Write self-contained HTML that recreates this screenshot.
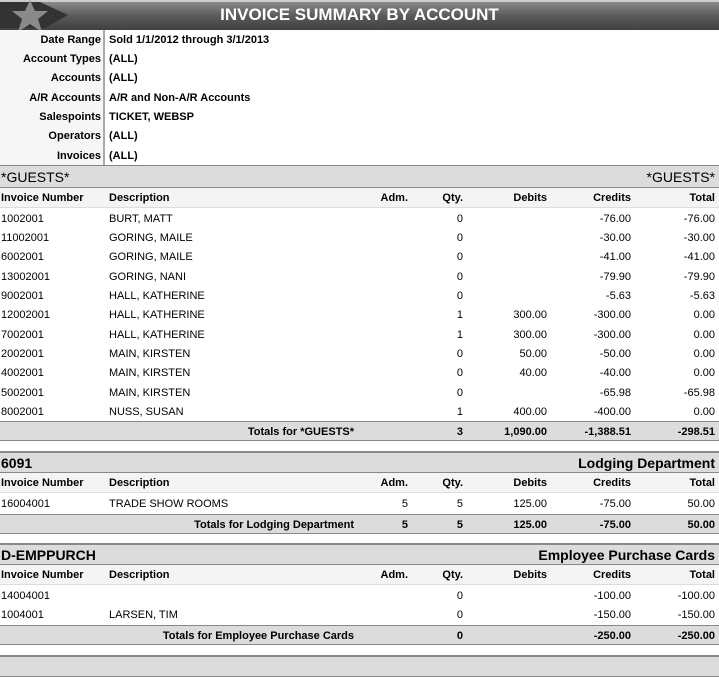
<!DOCTYPE html>
<html><head><style>
*{margin:0;padding:0;box-sizing:border-box}
body{width:719px;height:661px;position:relative;background:#fff;font-family:"Liberation Sans",Arial,sans-serif;font-size:11px;color:#000;overflow:hidden}
.a{position:absolute}
.r{position:absolute;left:0;width:719px;height:19px;line-height:19px}
.r span{position:absolute;white-space:nowrap;top:1px}
.b{font-weight:bold}
.hd{background:#f4f4f4;font-weight:bold;border-bottom:1px solid #ddd}
.tot{background:#dcdcdc;font-weight:bold;border-top:1px solid #888;border-bottom:1px solid #888;height:20px}
.sec{position:absolute;left:0;width:719px;height:22px;line-height:21px;background:#dcdcdc;border-top:2px solid #888;border-bottom:1px solid #888;font-size:14px}
.c1{left:1px}.c2{left:109px}
.ad{right:311px}.qt{right:256px}.de{right:172px}.cr{right:88px}.to{right:4px}
</style></head><body>
<div class="a" style="left:0;top:0;width:719px;height:30px;background:linear-gradient(#8a8a8a,#5a5a5a 50%,#404040);border-top:2px solid #ccc"></div>
<svg class="a" style="left:0;top:0" width="80" height="30"><polygon points="0,2 40,2 68,15 45,28 0,28" fill="#333"/><polygon points="30,0 35,11 48,11 38,19 42,32 30,24 18,32 22,19 12,11 25,11" fill="#8a8a8a"/></svg>
<div class="a" style="left:0;top:5px;width:719px;text-align:center;color:#fff;font-weight:bold;font-size:17px;line-height:20px">INVOICE SUMMARY BY ACCOUNT</div>
<div class="a" style="left:0;top:30px;width:105px;height:135px;background:#f6f6f6;border-right:2px solid #aaa"></div>
<div class="a" style="left:0;top:165px;width:719px;height:1px;background:#888"></div>
<div class="r b" style="top:30px"><span style="right:618px">Date Range</span><span style="left:109px">Sold 1/1/2012 through 3/1/2013</span></div>
<div class="r b" style="top:49px"><span style="right:618px">Account Types</span><span style="left:109px">(ALL)</span></div>
<div class="r b" style="top:68px"><span style="right:618px">Accounts</span><span style="left:109px">(ALL)</span></div>
<div class="r b" style="top:88px"><span style="right:618px">A/R Accounts</span><span style="left:109px">A/R and Non-A/R Accounts</span></div>
<div class="r b" style="top:107px"><span style="right:618px">Salespoints</span><span style="left:109px">TICKET, WEBSP</span></div>
<div class="r b" style="top:126px"><span style="right:618px">Operators</span><span style="left:109px">(ALL)</span></div>
<div class="r b" style="top:146px"><span style="right:618px">Invoices</span><span style="left:109px">(ALL)</span></div>

<div class="sec" style="top:165px;border-top:1px solid #888;height:23px"><span class="a" style="left:1px;top:1px">*GUESTS*</span><span class="a" style="right:4px;top:1px">*GUESTS*</span></div>
<div class="r hd" style="top:188px;height:20px"><span class="c1">Invoice Number</span><span class="c2">Description</span><span class="ad">Adm.</span><span class="qt">Qty.</span><span class="de">Debits</span><span class="cr">Credits</span><span class="to">Total</span></div>
<div class="r" style="top:209px"><span class="c1">1002001</span><span class="c2">BURT, MATT</span><span class="qt">0</span><span class="cr">-76.00</span><span class="to">-76.00</span></div>
<div class="r" style="top:228px"><span class="c1">11002001</span><span class="c2">GORING, MAILE</span><span class="qt">0</span><span class="cr">-30.00</span><span class="to">-30.00</span></div>
<div class="r" style="top:247px"><span class="c1">6002001</span><span class="c2">GORING, MAILE</span><span class="qt">0</span><span class="cr">-41.00</span><span class="to">-41.00</span></div>
<div class="r" style="top:267px"><span class="c1">13002001</span><span class="c2">GORING, NANI</span><span class="qt">0</span><span class="cr">-79.90</span><span class="to">-79.90</span></div>
<div class="r" style="top:286px"><span class="c1">9002001</span><span class="c2">HALL, KATHERINE</span><span class="qt">0</span><span class="cr">-5.63</span><span class="to">-5.63</span></div>
<div class="r" style="top:305px"><span class="c1">12002001</span><span class="c2">HALL, KATHERINE</span><span class="qt">1</span><span class="de">300.00</span><span class="cr">-300.00</span><span class="to">0.00</span></div>
<div class="r" style="top:325px"><span class="c1">7002001</span><span class="c2">HALL, KATHERINE</span><span class="qt">1</span><span class="de">300.00</span><span class="cr">-300.00</span><span class="to">0.00</span></div>
<div class="r" style="top:344px"><span class="c1">2002001</span><span class="c2">MAIN, KIRSTEN</span><span class="qt">0</span><span class="de">50.00</span><span class="cr">-50.00</span><span class="to">0.00</span></div>
<div class="r" style="top:363px"><span class="c1">4002001</span><span class="c2">MAIN, KIRSTEN</span><span class="qt">0</span><span class="de">40.00</span><span class="cr">-40.00</span><span class="to">0.00</span></div>
<div class="r" style="top:383px"><span class="c1">5002001</span><span class="c2">MAIN, KIRSTEN</span><span class="qt">0</span><span class="cr">-65.98</span><span class="to">-65.98</span></div>
<div class="r" style="top:402px"><span class="c1">8002001</span><span class="c2">NUSS, SUSAN</span><span class="qt">1</span><span class="de">400.00</span><span class="cr">-400.00</span><span class="to">0.00</span></div>
<div class="r tot" style="top:421px;line-height:19px"><span style="right:365px">Totals for *GUESTS*</span><span class="qt">3</span><span class="de">1,090.00</span><span class="cr">-1,388.51</span><span class="to">-298.51</span></div>

<div class="sec b" style="top:451px"><span class="a" style="left:1px">6091</span><span class="a" style="right:4px">Lodging Department</span></div>
<div class="r hd" style="top:473px;height:20px"><span class="c1">Invoice Number</span><span class="c2">Description</span><span class="ad">Adm.</span><span class="qt">Qty.</span><span class="de">Debits</span><span class="cr">Credits</span><span class="to">Total</span></div>
<div class="r" style="top:494px"><span class="c1">16004001</span><span class="c2">TRADE SHOW ROOMS</span><span class="ad">5</span><span class="qt">5</span><span class="de">125.00</span><span class="cr">-75.00</span><span class="to">50.00</span></div>
<div class="r tot" style="top:514px;line-height:19px"><span style="right:365px">Totals for Lodging Department</span><span class="ad">5</span><span class="qt">5</span><span class="de">125.00</span><span class="cr">-75.00</span><span class="to">50.00</span></div>

<div class="sec b" style="top:543px"><span class="a" style="left:1px">D-EMPPURCH</span><span class="a" style="right:4px">Employee Purchase Cards</span></div>
<div class="r hd" style="top:565px;height:20px"><span class="c1">Invoice Number</span><span class="c2">Description</span><span class="ad">Adm.</span><span class="qt">Qty.</span><span class="de">Debits</span><span class="cr">Credits</span><span class="to">Total</span></div>
<div class="r" style="top:586px"><span class="c1">14004001</span><span class="qt">0</span><span class="cr">-100.00</span><span class="to">-100.00</span></div>
<div class="r" style="top:605px"><span class="c1">1004001</span><span class="c2">LARSEN, TIM</span><span class="qt">0</span><span class="cr">-150.00</span><span class="to">-150.00</span></div>
<div class="r tot" style="top:625px;line-height:19px"><span style="right:365px">Totals for Employee Purchase Cards</span><span class="qt">0</span><span class="cr">-250.00</span><span class="to">-250.00</span></div>
<div class="sec" style="top:655px"></div>
</body></html>
